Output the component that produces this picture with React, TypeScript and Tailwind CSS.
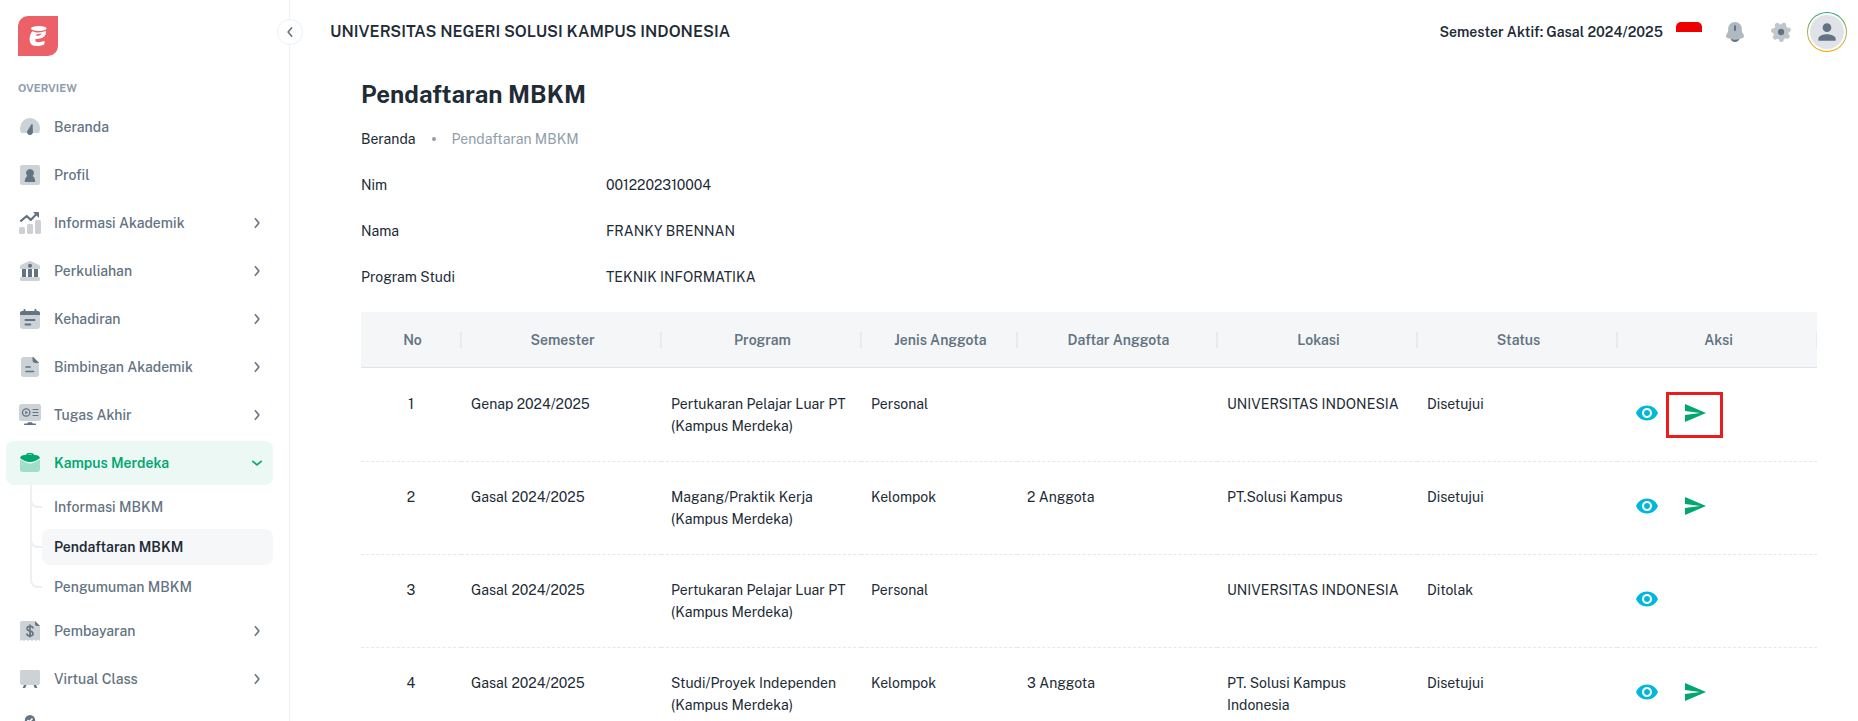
import { ReactNode } from "react";
import { MdPerson, MdSend, MdVisibility } from "react-icons/md";

type SubItem = { label: string; active?: boolean };
type NavItem = {
    label: string;
    icon: ReactNode;
    expandable?: boolean;
    active?: boolean;
    children?: SubItem[];
};

function Icon({ children }: { children: ReactNode }) {
    return (
        <svg viewBox="0 0 24 24" className="size-6 shrink-0" fill="currentColor" aria-hidden="true">
            {children}
        </svg>
    );
}

const navItems: NavItem[] = [
    {
        label: "Beranda",
        icon: (
            <Icon>
                <path opacity=".32" d="M2 13a10 10 0 0 1 20 0c0 2-.3 3.5-.8 4.4-.2.4-.6.6-1 .6H3.800c-.4 0-.8-.2-1-.6C2.300 16.500 2 15 2 13z" />
                <path d="M13.500 9.200c.6-.3 1.200 0 1.200.7l.2 6.300a3 3 0 1 1-5-1.300z" />
            </Icon>
        ),
    },
    {
        label: "Profil",
        icon: (
            <Icon>
                <rect opacity=".32" x="2" y="2" width="20" height="20" rx="2" />
                <path d="M12 6a4 4 0 0 1 2.600 7c1.400.9 2.400 2.900 2.700 5.300.1.4-.2.7-.6.7H7.300c-.4 0-.7-.3-.6-.7.3-2.400 1.300-4.400 2.700-5.300A4 4 0 0 1 12 6z" />
            </Icon>
        ),
    },
    {
        label: "Informasi Akademik",
        expandable: true,
        icon: (
            <Icon>
                <g opacity=".32">
                    <rect x="1" y="16" width="6" height="7" rx="1.500" />
                    <rect x="9" y="13" width="6" height="10" rx="1.500" />
                    <rect x="17" y="9" width="6" height="14" rx="1.500" />
                </g>
                <path d="M3 9.800 8.700 5l4 3.900L18.500 3" fill="none" stroke="currentColor" strokeWidth="2.200" strokeLinecap="round" strokeLinejoin="round" />
                <path d="M15 1h5.200c.5 0 .8.3.8.8V7z" />
            </Icon>
        ),
    },
    {
        label: "Perkuliahan",
        expandable: true,
        icon: (
            <Icon>
                <path opacity=".32" d="M10.800 2.300a3 3 0 0 1 2.400 0l7.600 3.500c.8.4 1.200 1 1.200 1.800v1.600c0 .5-.4.8-.8.8H2.800c-.4 0-.8-.3-.8-.8V7.600c0-.8.4-1.400 1.200-1.800zM3.500 18h17c.8 0 1.500.7 1.500 1.500v1c0 .8-.7 1.500-1.500 1.500h-17c-.8 0-1.500-.7-1.500-1.500v-1c0-.8.7-1.500 1.500-1.500z" />
                <circle cx="12" cy="6.800" r="2" />
                <path d="M4 10h4v8H4zM10 10h4v8h-4zM16 10h4v8h-4z" />
            </Icon>
        ),
    },
    {
        label: "Kehadiran",
        expandable: true,
        icon: (
            <Icon>
                <path opacity=".32" d="M2 8h20v11a3 3 0 0 1-3 3H5a3 3 0 0 1-3-3z" />
                <path d="M5.500 2.800c0-1 2-1 2 0V4h9V2.800c0-1 2-1 2 0V4h1.300C21.200 4 22 4.800 22 6v2H2V6c0-1.200.8-2 2.200-2h1.300z" />
                <path d="M7.500 13h9M7.500 17.500h4.800" stroke="currentColor" strokeWidth="2" strokeLinecap="round" />
            </Icon>
        ),
    },
    {
        label: "Bimbingan Akademik",
        expandable: true,
        icon: (
            <Icon>
                <path opacity=".32" d="M5.500 2H15l6 6v11.500c0 1.500-1 2.500-2.500 2.500h-13C4 22 3 21 3 19.500v-15C3 3 4 2 5.500 2z" />
                <path d="M14.500 2h.7L21 7.700V8h-3.500a3 3 0 0 1-3-3z" />
                <path d="M8 12h4.200M8 16.500h7.500" stroke="currentColor" strokeWidth="1.600" strokeLinecap="round" />
            </Icon>
        ),
    },
    {
        label: "Tugas Akhir",
        expandable: true,
        icon: (
            <Icon>
                <rect opacity=".32" x="1" y="1" width="22" height="17" rx="2.500" />
                <circle cx="8.200" cy="9.500" r="3.700" fill="none" stroke="currentColor" strokeWidth="1.300" />
                <path d="M7.200 7.700v3.600l3-1.800zM10 19.200h4l.7 1.300h2.600c1 0 1 1.500 0 1.500H6.700c-1 0-1-1.500 0-1.500h2.600z" />
                <path d="M15 6.500h5M15 9.500h5M15 12.500h5" stroke="currentColor" strokeWidth="1.200" strokeLinecap="round" />
            </Icon>
        ),
    },
    {
        label: "Kampus Merdeka",
        expandable: true,
        active: true,
        icon: (
            <Icon>
                <path opacity=".32" d="M2 8.500 9 12c2 .8 4 .8 6 0l7-3.500V18a3 3 0 0 1-3 3H5a3 3 0 0 1-3-3z" />
                <path d="M8 4c.3-1.200 1.200-2 2.500-2h3c1.300 0 2.200.8 2.500 2h1.500c2 0 4 1.200 4.500 3-2.500 2.300-6 4-10 4S4.500 9.300 2 7c.5-1.800 2.500-3 4.500-3zm1.800 0h4.400c-.2-.4-.5-.6-.9-.6h-2.600c-.4 0-.7.2-.9.6z" />
            </Icon>
        ),
        children: [
            { label: "Informasi MBKM" },
            { label: "Pendaftaran MBKM", active: true },
            { label: "Pengumuman MBKM" },
        ],
    },
    {
        label: "Pembayaran",
        expandable: true,
        icon: (
            <Icon>
                <path opacity=".32" d="M4 2h13l5 5v15l-1.800-1.200L18 22l-2-1.200L14 22l-2-1.200L10 22l-2-1.200L6 22l-2.200-1.200L2 22V4c0-1.200.8-2 2-2z" />
                <path d="M17 2l5 5h-3c-1.200 0-2-.8-2-2z" />
                <path d="M15 9.500c0-1.400-1.200-2.300-3-2.300s-3 .9-3 2.400c0 3.300 6 1.500 6 4.900 0 1.500-1.200 2.400-3 2.400s-3.100-1-3.100-2.500M12 5.500v13" fill="none" stroke="currentColor" strokeWidth="1.600" />
            </Icon>
        ),
    },
    {
        label: "Virtual Class",
        expandable: true,
        icon: (
            <Icon>
                <path opacity=".32" d="M3.500 3h17c.8 0 1.500.7 1.500 1.500V16c0 1.200-.8 2-2 2H4c-1.200 0-2-.8-2-2V4.500C2 3.700 2.700 3 3.500 3z" />
                <path d="M6 18h2.500l-1.300 3H4.600zM15.500 18H18l1.400 3h-2.600z" />
            </Icon>
        ),
    },
    {
        label: "",
        icon: (
            <Icon>
                <circle cx="12" cy="5.200" r="5.200" />
                <path d="m9.500 5 1.800 1.800 3.200-3.300" fill="none" stroke="#fff" strokeWidth="1.500" />
                <path opacity=".32" d="M3 12h18v10H3z" />
            </Icon>
        ),
    },
];

const biodata = [
    { label: "Nim", value: "0012202310004" },
    { label: "Nama", value: "FRANKY BRENNAN" },
    { label: "Program Studi", value: "TEKNIK INFORMATIKA" },
];

const columns = [
    { title: "No", width: "w-[100px]" },
    { title: "Semester", width: "w-[200px]" },
    { title: "Program", width: "w-[200px]" },
    { title: "Jenis Anggota", width: "w-[156px]" },
    { title: "Daftar Anggota", width: "w-[200px]" },
    { title: "Lokasi", width: "w-[200px]" },
    { title: "Status", width: "w-[200px]" },
    { title: "Aksi", width: "w-[200px]" },
];

const rows = [
    { semester: "Genap 2024/2025", program: "Pertukaran Pelajar Luar PT (Kampus Merdeka)", jenis: "Personal", anggota: "", lokasi: "UNIVERSITAS INDONESIA", status: "Disetujui", kirim: true, sorot: true },
    { semester: "Gasal 2024/2025", program: "Magang/Praktik Kerja (Kampus Merdeka)", jenis: "Kelompok", anggota: "2 Anggota", lokasi: "PT.Solusi Kampus", status: "Disetujui", kirim: true },
    { semester: "Gasal 2024/2025", program: "Pertukaran Pelajar Luar PT (Kampus Merdeka)", jenis: "Personal", anggota: "", lokasi: "UNIVERSITAS INDONESIA", status: "Ditolak", kirim: false },
    { semester: "Gasal 2024/2025", program: "Studi/Proyek Independen (Kampus Merdeka)", jenis: "Kelompok", anggota: "3 Anggota", lokasi: "PT. Solusi Kampus Indonesia", status: "Disetujui", kirim: true },
];

const gearAngles = [-119, -68, -16, 35, 87, 138, 190];

function Chevron({ className }: { className: string }) {
    return (
        <svg viewBox="0 0 16 16" className={className} fill="none" stroke="currentColor" strokeWidth="1.600" strokeLinecap="round" strokeLinejoin="round" aria-hidden="true">
            <path d="m6.300 3.800 3.600 4.200-3.600 4.200" />
        </svg>
    );
}

function Sidebar() {
    return (
        <aside className="relative w-[290px] shrink-0 border-r border-[#edeff2]">
            <div className="h-full overflow-hidden pl-[6px] pr-4 pt-4">
                <a href="#" aria-label="Beranda" className="ml-3 block size-10">
                    <svg viewBox="0 0 40 40" className="size-10" aria-hidden="true">
                        <path d="M10 0h30v30a10 10 0 0 1-10 10H0V10A10 10 0 0 1 10 0z" fill="#ec6168" />
                        <path d="M14.300 15.200C18 17 23.500 17 27.800 14.800c1 4.600-2 8.300-10.300 8.200-.7 2.300.8 3.400 3 3.200 2-.1 4-.5 6.200-1.200l-.6 3.700c-3 1.100-5.500 1.400-8 1.300-6-.2-7-4.600-6.300-9 .4-2.300 1.200-4.200 2.500-5.800z" fill="#fff" />
                        <path d="M18 19.800c2.600.1 5-.4 5.600-2.300-1.700.4-3.300.5-4.700.4z" fill="#ec6168" />
                        <ellipse cx="20.800" cy="12.500" rx="7.800" ry="2.500" fill="#fff" />
                    </svg>
                </a>
                <p className="mb-2 ml-3 mt-[23px] text-[11px] font-bold leading-[18px] text-[#919eab]">OVERVIEW</p>
                <nav>
                    <ul className="flex flex-col gap-1 text-sm">
                        {navItems.map((item, idx) => (
                            <li key={idx}>
                                <a
                                    href="#"
                                    className={`flex h-11 items-center gap-3 rounded-lg pl-3 pr-2 ${item.active ? "bg-[#ebf8f4] font-semibold text-[#00a76f]" : "font-medium text-[#637381]"}`}
                                >
                                    {item.icon}
                                    <span className="flex-1">{item.label}</span>
                                    {item.expandable && <Chevron className={item.active ? "size-4 rotate-90" : "size-4"} />}
                                </a>
                                {item.children && (
                                    <ul className="mt-1 flex flex-col gap-1">
                                        {item.children.map((sub, i) => (
                                            <li key={sub.label} className="relative pl-9">
                                                <span className="absolute -top-1 left-6 h-[23px] w-3 rounded-bl-lg border-b-2 border-l-2 border-[#edeff2]" />
                                                {i < item.children!.length - 1 && (
                                                    <span className="absolute -top-1 bottom-0 left-6 w-[2px] bg-[#edeff2]" />
                                                )}
                                                <a
                                                    href="#"
                                                    className={`relative flex h-9 items-center rounded-lg pl-3 ${sub.active ? "bg-[#f6f7f8] font-semibold text-[#212b36]" : "font-medium text-[#637381]"}`}
                                                >
                                                    {sub.label}
                                                </a>
                                            </li>
                                        ))}
                                    </ul>
                                )}
                            </li>
                        ))}
                    </ul>
                </nav>
            </div>
            <button
                type="button"
                aria-label="Tutup menu"
                className="absolute -right-[14px] top-[19px] flex size-[26px] items-center justify-center rounded-full border border-[#edeff2] bg-white text-[#637381]"
            >
                <Chevron className="size-4 rotate-180" />
            </button>
        </aside>
    );
}

function Topbar() {
    return (
        <header className="flex h-16 items-center pl-10 pr-[11px] text-[#212b36]">
            <p className="flex-1 text-base font-semibold">UNIVERSITAS NEGERI SOLUSI KAMPUS INDONESIA</p>
            <p className="text-sm font-semibold">Semester Aktif: Gasal 2024/2025</p>
            <button type="button" aria-label="Bahasa Indonesia" className="ml-[13px] h-5 w-[26px] overflow-hidden rounded-[5px] bg-white">
                <span className="-mt-[10px] block h-[10px] bg-[#ee0000]" />
            </button>
            <button type="button" aria-label="Notifikasi" className="ml-[21px] text-[#637381]">
                <Icon>
                    <path opacity=".5" d="M12 2c4 0 6.800 3 6.800 6.800v1.700c0 .9.3 1.700.8 2.500l.9 1.300c1 1.500.4 3.500-1.300 4A25 25 0 0 1 12 19.300a25 25 0 0 1-7.200-1c-1.700-.5-2.300-2.500-1.300-4l.9-1.300c.5-.8.8-1.600.8-2.500V8.800C5.200 5 8 2 12 2z" />
                    <path d="M12 5.200c.6 0 1 .4 1 1v4c0 1-2 1-2 0v-4c0-.6.4-1 1-1zM7.500 19a26 26 0 0 0 9 0c-.8 1.800-2.500 3-4.500 3s-3.700-1.200-4.500-3z" />
                </Icon>
            </button>
            <button type="button" aria-label="Pengaturan" className="ml-[22px] text-[#637381]">
                <Icon>
                    <g opacity=".4">
                        <circle cx="12" cy="12" r="7.800" />
                        {gearAngles.map((a) => (
                            <path key={a} d="M12 12h7.800" transform={`rotate(${a} 12 12)`} stroke="currentColor" strokeWidth="4.600" strokeLinecap="round" />
                        ))}
                    </g>
                    <circle cx="12" cy="12" r="3.200" />
                </Icon>
            </button>
            <button
                type="button"
                aria-label="Akun"
                className="ml-[14px] flex size-10 items-center justify-center rounded-full bg-gradient-to-b from-[#00a76f] to-[#ffab00] p-px"
            >
                <span className="flex size-full items-center justify-center rounded-full bg-white">
                    <span className="flex size-[34px] items-center justify-center rounded-full bg-[#dfe3e8]">
                        <MdPerson className="size-[26px] text-[#637381]" />
                    </span>
                </span>
            </button>
        </header>
    );
}

export default function App() {
    return (
        <div className="flex h-screen overflow-hidden bg-white font-['Public_Sans',Inter,sans-serif] text-sm text-[#212b36]">
            <Sidebar />
            <div className="flex min-w-0 flex-1 flex-col">
                <Topbar />
                <main className="min-h-0 flex-1 overflow-hidden pl-[71px] pr-[41px] pt-3">
                    <h1 className="text-2xl font-bold leading-9">Pendaftaran MBKM</h1>
                    <nav aria-label="Breadcrumb" className="mt-4 flex items-center gap-4 leading-[22px]">
                        <a href="#">Beranda</a>
                        <span className="size-1 rounded-full bg-[#919eab]" />
                        <span className="text-[#919eab]">Pendaftaran MBKM</span>
                    </nav>
                    <dl className="mb-3 mt-3 leading-[22px]">
                        {biodata.map((b) => (
                            <div key={b.label} className="flex py-3">
                                <dt className="w-[245px]">{b.label}</dt>
                                <dd>{b.value}</dd>
                            </div>
                        ))}
                    </dl>

                    <div className="overflow-hidden">
                        <table className="w-full table-fixed border-separate border-spacing-0 leading-[22px]">
                            <thead>
                                <tr className="bg-[#f4f6f8] text-[#637381]">
                                    {columns.map((col) => (
                                        <th key={col.title} scope="col" className={`relative h-14 border-b border-[#dfe3e8] p-0 pl-[3px] text-center font-semibold ${col.width}`}>
                                            {col.title}
                                            <span className="absolute -right-px top-5 h-4 w-[2px] bg-[#e9ecef]" />
                                        </th>
                                    ))}
                                </tr>
                            </thead>
                            <tbody className="align-top">
                                {rows.map((row, idx) => (
                                    <tr key={idx} className="*:border-b *:border-dashed *:border-[#e5e8eb] *:px-[10px] *:pb-6 *:pt-6 first:*:pt-[25px]">
                                        <td className="text-center">{idx + 1}</td>
                                        <td>{row.semester}</td>
                                        <td>{row.program}</td>
                                        <td>{row.jenis}</td>
                                        <td>{row.anggota}</td>
                                        <td>{row.lokasi}</td>
                                        <td>{row.status}</td>
                                        <td>
                                            <div className="flex gap-2">
                                                <button type="button" aria-label="Lihat" className="p-2 text-[#00b8d9]">
                                                    <MdVisibility className="size-6" />
                                                </button>
                                                {row.kirim && (
                                                    <button type="button" aria-label="Kirim" className="relative p-2 text-[#00a76f]">
                                                        <MdSend className="size-6" />
                                                        {row.sorot && (
                                                            <span className="absolute -left-[9px] -top-px h-[46px] w-[57px] border-[3px] border-[#ec1c1c]" />
                                                        )}
                                                    </button>
                                                )}
                                            </div>
                                        </td>
                                    </tr>
                                ))}
                            </tbody>
                        </table>
                    </div>
                </main>
            </div>
        </div>
    );
}
